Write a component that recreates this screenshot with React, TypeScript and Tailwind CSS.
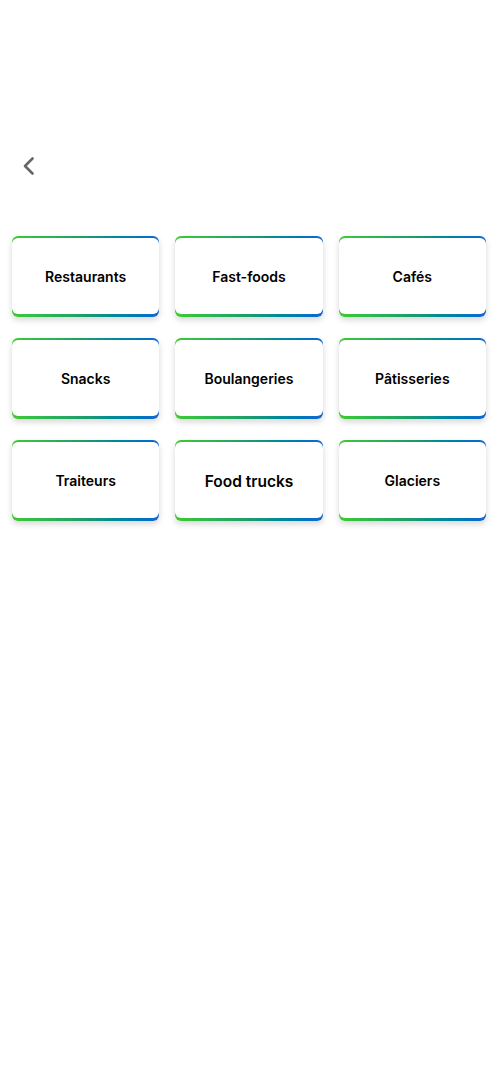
import React from "react";

const items = [
  { label: "Restaurants" },
  { label: "Fast-foods" },
  { label: "Cafés" },
  { label: "Snacks" },
  { label: "Boulangeries" },
  { label: "Pâtisseries" },
  { label: "Traiteurs" },
  { label: "Food trucks", big: true },
  { label: "Glaciers" },
];

export default function App() {
  return (
    <div
      className="min-h-[1080px] w-full bg-white"
      style={{ fontFamily: "Inter, 'Open Sans', sans-serif" }}
    >
      <div className="h-[153px]" />
      <div className="px-[18px]">
        <button className="flex h-[26px] w-[20px] items-center justify-center">
          <svg width="14" height="20" viewBox="0 0 14 20" fill="none">
            <path
              d="M11.5 2.5 L4 10 L11.5 17.5"
              stroke="#666666"
              strokeWidth="2.6"
              strokeLinecap="round"
              strokeLinejoin="round"
            />
          </svg>
        </button>
      </div>
      <div className="h-[57px]" />
      <div className="grid grid-cols-3 gap-x-4 gap-y-[21px] px-3">
        {items.map((it) => (
          <div
            key={it.label}
            className="rounded-[6px] bg-gradient-to-r from-[#3ecb2c] via-[#1f9a6a] to-[#1464d2] pt-[2px] pb-[3px] shadow-[0_3px_6px_rgba(0,0,0,0.16)]"
          >
            <div className="flex h-[76px] items-center justify-center rounded-[6px] bg-white">
              <span
                className={
                  it.big
                    ? "mt-[3px] text-[15.5px] font-semibold text-black"
                    : "text-[14px] font-semibold text-black"
                }
              >
                {it.label}
              </span>
            </div>
          </div>
        ))}
      </div>
    </div>
  );
}
